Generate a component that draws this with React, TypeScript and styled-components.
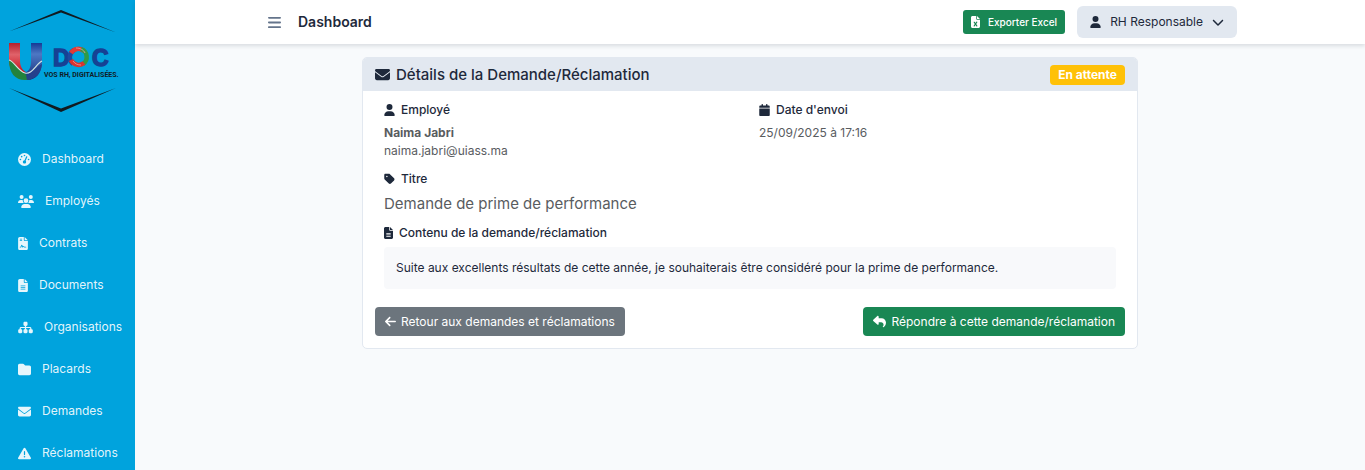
import React from "react";
import styled, { createGlobalStyle } from "styled-components";
import type { IconType } from "react-icons";
import {
  FaArrowLeft,
  FaBars,
  FaCalendar,
  FaChevronDown,
  FaEnvelope,
  FaFileContract,
  FaFileExcel,
  FaFileLines,
  FaFolder,
  FaGaugeHigh,
  FaReply,
  FaSitemap,
  FaTag,
  FaTriangleExclamation,
  FaUser,
  FaUsers,
} from "react-icons/fa6";

const GlobalStyle = createGlobalStyle`
  *, *::before, *::after { box-sizing: border-box; }
  body {
    margin: 0;
    background: #f8fafc;
    color: #1e293b;
    font-family: Inter, "Liberation Sans", sans-serif;
    font-size: 12px;
    line-height: 18px;
  }
  button { font: inherit; color: inherit; border: 0; cursor: pointer; }
  a { color: inherit; text-decoration: none; }
  h1, h2, h3, p { margin: 0; }
`;

const Glyph = styled.span<{ $width: number; $height: number }>`
  display: flex;
  flex: none;
  width: ${({ $width }) => $width}px;
  height: ${({ $height }) => $height}px;

  svg {
    width: 100%;
    height: 100%;
  }
`;

const Shell = styled.div`
  display: grid;
  grid-template-columns: 135px 1fr;
  height: 100vh;
  overflow: hidden;
`;

const Sidebar = styled.aside`
  background: #00a3dd;
  overflow: hidden;
`;

const LogoLink = styled.a`
  display: block;
  height: 138px;
`;

const NavList = styled.nav`
  display: flex;
  flex-direction: column;
`;

const NavLink = styled.a`
  display: flex;
  align-items: center;
  gap: 11px;
  height: 42px;
  padding-left: 18px;
  color: rgba(255, 255, 255, 0.9);
  font-weight: 400;
  white-space: nowrap;
`;

const Page = styled.div`
  min-width: 0;
`;

const TopBar = styled.header`
  position: relative;
  background: #fff;
  box-shadow: 0 2px 4px rgba(30, 41, 59, 0.14);
`;

const TopBarInner = styled.div`
  display: flex;
  align-items: center;
  gap: 12px;
  width: 80%;
  height: 44px;
  margin: 0 auto;
  padding: 0 5px;
`;

const MenuButton = styled.button`
  display: flex;
  padding: 5px;
  background: none;
  color: #64748b;
`;

const PageTitle = styled.h1`
  margin-right: auto;
  font-size: 14px;
  font-weight: 600;
`;

const ExportButton = styled.button`
  display: flex;
  align-items: center;
  gap: 8px;
  height: 24px;
  padding: 0 8px;
  border-radius: 3px;
  background: #198754;
  color: #fff;
  font-size: 10px;
  font-weight: 500;
`;

const UserButton = styled.button`
  display: flex;
  align-items: center;
  gap: 9px;
  height: 32px;
  padding: 0 13px;
  border-radius: 6px;
  background: #e2e8f0;
`;

const Main = styled.main`
  padding: 13px 15px;
`;

const Column = styled.div`
  width: 66.6667%;
  margin: 0 auto;
  padding: 0 12px;
`;

const Card = styled.article`
  border: 1px solid #e2e8f0;
  border-radius: 5px;
  background: #fff;
  overflow: hidden;
`;

const CardHeader = styled.header`
  display: flex;
  align-items: center;
  justify-content: space-between;
  height: 33px;
  padding: 0 12px;
  background: #e2e8f0;
`;

const CardTitle = styled.h2`
  display: flex;
  align-items: center;
  gap: 6px;
  font-size: 15px;
  font-weight: 500;
`;

const Badge = styled.span`
  padding: 1px 8px;
  border-radius: 4px;
  background: #ffc107;
  color: #fff;
  font-size: 12px;
  font-weight: 700;
`;

const Details = styled.div`
  display: grid;
  grid-template-columns: 1fr 1fr;
  row-gap: 10px;
  padding: 10px 12px 0;
`;

const Field = styled.section<{ $wide?: boolean }>`
  grid-column: ${({ $wide }) => ($wide ? "1 / -1" : "auto")};
  padding: 0 9px;
`;

const Label = styled.h3`
  display: flex;
  align-items: center;
  gap: 6px;
  margin-bottom: 5px;
  font-size: 12px;
  font-weight: 500;
`;

const Value = styled.p<{ $strong?: boolean; $large?: boolean }>`
  color: #595c5f;
  font-size: ${({ $large }) => ($large ? "15px" : "12px")};
  line-height: ${({ $large }) => ($large ? "21px" : "18px")};
  font-weight: ${({ $strong }) => ($strong ? 700 : 400)};
`;

const Message = styled.p`
  padding: 12px;
  border-radius: 4px;
  background: #f8f9fb;
`;

const Actions = styled.footer`
  display: flex;
  justify-content: space-between;
  padding: 18px 12px 12px;
`;

const ActionLink = styled.a<{ $tone: "neutral" | "success" }>`
  display: flex;
  align-items: center;
  gap: 5px;
  height: 29px;
  padding: 0 10px;
  border-radius: 4px;
  background: ${({ $tone }) => ($tone === "success" ? "#198754" : "#6c757d")};
  color: #fff;
  font-weight: 400;
`;

interface IconProps {
  of: IconType;
  width: number;
  height: number;
}

function Icon({ of: Shape, width, height }: IconProps) {
  return (
    <Glyph $width={width} $height={height}>
      <Shape />
    </Glyph>
  );
}

const navItems = [
  { label: "Dashboard", icon: FaGaugeHigh, width: 13 },
  { label: "Employés", icon: FaUsers, width: 16 },
  { label: "Contrats", icon: FaFileContract, width: 10 },
  { label: "Documents", icon: FaFileLines, width: 10 },
  { label: "Organisations", icon: FaSitemap, width: 15 },
  { label: "Placards", icon: FaFolder, width: 13 },
  { label: "Demandes", icon: FaEnvelope, width: 13 },
  { label: "Réclamations", icon: FaTriangleExclamation, width: 13 },
];

function Logo() {
  return (
    <svg width="135" height="120" viewBox="0 0 135 120" role="img" aria-label="U DOC">
      <defs>
        <linearGradient id="red" x1="0" y1="0" x2="0" y2="1">
          <stop offset="0" stopColor="#b5202c" />
          <stop offset=".35" stopColor="#e0626a" />
          <stop offset="1" stopColor="#c4000d" />
        </linearGradient>
        <linearGradient id="blue" x1="0" y1="0" x2="0" y2="1">
          <stop offset="0" stopColor="#173a94" />
          <stop offset=".3" stopColor="#4d78c4" />
          <stop offset="1" stopColor="#142a78" />
        </linearGradient>
      </defs>
      <path d="M9 31.500 61 10 116 32.500 61 12.500Z" fill="#111a20" />
      <path d="M9 88 61 112 116 88 61 108.500Z" fill="#111a20" />
      <path d="M9 43h11v17c0 6 2 10 6 12l-4 4C14 73 9 69 9 61Z" fill="url(#red)" />
      <path d="M31 43h11v19c0 11-6 18-15 18l-5-7c6 0 9-4 9-12Z" fill="url(#blue)" />
      <path d="M9 60c5 1 9 10 18 15l7 1c-2 3-5 4-9 4C15 80 9 73 9 60Z" fill="#23823d" />
      <path d="M9 60c5 1 9 11 16 13s11-9 17-12" fill="none" stroke="#d4e5e1" strokeWidth="1.2" />
      <path d="M26 75c7-1 10-8 16-11-1 9-6 15-15 16Z" fill="#25418c" />
      <g fill="#164194" fontFamily="Liberation Sans, sans-serif" fontWeight="700" fontSize="23">
        <text x="53" y="66" stroke="#164194" strokeWidth="1.400">D</text>
        <text x="92" y="66" stroke="#164194" strokeWidth="1.400">C</text>
      </g>
      <g fill="none" strokeWidth="4.500">
        <path d="M73 64a8.500 8.500 0 0 1 1-14" stroke="#1d4aa0" />
        <path d="M71 53a8.500 8.500 0 0 1 13-2" stroke="#e33a35" />
        <path d="M81 49a8.500 8.500 0 0 1 2 15" stroke="#2f9a48" />
        <path d="M84 63a8.500 8.500 0 0 1-13-3" stroke="#d8322f" />
      </g>
      <path d="M76 48c4 0 8 2 9 5M73 61c2 3 5 4 8 4" fill="none" stroke="#f0a09b" strokeWidth=".8" />
      <text x="44" y="77" fill="#101c26" fontFamily="Roboto, sans-serif" fontWeight="700" fontSize="7">
        VOS RH, DIGITALISÉES.
      </text>
    </svg>
  );
}

export default function App() {
  return (
    <>
      <GlobalStyle />
      <Shell>
        <Sidebar>
          <LogoLink href="#">
            <Logo />
          </LogoLink>
          <NavList>
            {navItems.map(({ label, icon, width }) => (
              <NavLink href="#" key={label}>
                <Icon of={icon} width={width} height={13} />
                {label}
              </NavLink>
            ))}
          </NavList>
        </Sidebar>
        <Page>
          <TopBar>
            <TopBarInner>
              <MenuButton type="button" aria-label="Menu">
                <Icon of={FaBars} width={13} height={15} />
              </MenuButton>
              <PageTitle>Dashboard</PageTitle>
              <ExportButton type="button">
                <Icon of={FaFileExcel} width={9} height={12} />
                Exporter Excel
              </ExportButton>
              <UserButton type="button">
                <Icon of={FaUser} width={11} height={12} />
                RH Responsable
                <Icon of={FaChevronDown} width={12} height={12} />
              </UserButton>
            </TopBarInner>
          </TopBar>
          <Main>
            <Column>
              <Card>
                <CardHeader>
                  <CardTitle>
                    <Icon of={FaEnvelope} width={15} height={15} />
                    Détails de la Demande/Réclamation
                  </CardTitle>
                  <Badge>En attente</Badge>
                </CardHeader>
                <Details>
                  <Field>
                    <Label>
                      <Icon of={FaUser} width={11} height={12} />
                      Employé
                    </Label>
                    <Value $strong>Naima Jabri</Value>
                    <Value>naima.jabri@uiass.ma</Value>
                  </Field>
                  <Field>
                    <Label>
                      <Icon of={FaCalendar} width={11} height={12} />
                      Date d'envoi
                    </Label>
                    <Value>25/09/2025 à 17:16</Value>
                  </Field>
                  <Field $wide>
                    <Label>
                      <Icon of={FaTag} width={11} height={12} />
                      Titre
                    </Label>
                    <Value $large>Demande de prime de performance</Value>
                  </Field>
                  <Field $wide>
                    <Label>
                      <Icon of={FaFileLines} width={9} height={12} />
                      Contenu de la demande/réclamation
                    </Label>
                    <Message>
                      Suite aux excellents résultats de cette année, je souhaiterais être considéré pour la prime de
                      performance.
                    </Message>
                  </Field>
                </Details>
                <Actions>
                  <ActionLink href="#" $tone="neutral">
                    <Icon of={FaArrowLeft} width={11} height={13} />
                    Retour aux demandes et réclamations
                  </ActionLink>
                  <ActionLink href="#" $tone="success">
                    <Icon of={FaReply} width={13} height={13} />
                    Répondre à cette demande/réclamation
                  </ActionLink>
                </Actions>
              </Card>
            </Column>
          </Main>
        </Page>
      </Shell>
    </>
  );
}
